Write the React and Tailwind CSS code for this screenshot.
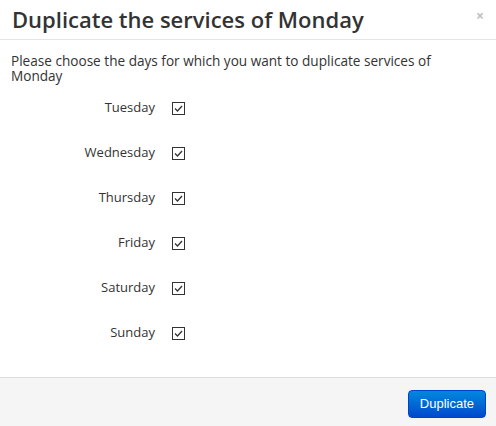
import React from 'react';

const days = ['Tuesday', 'Wednesday', 'Thursday', 'Friday', 'Saturday', 'Sunday'];

const CheckMark = () => (
    <span className="flex h-[13px] w-[13px] items-center justify-center border border-[#333] bg-white">
        <svg width="11" height="11" viewBox="0 0 11 11" fill="none">
            <path d="M2 5.5 L4.5 8 L9 3" stroke="#333" strokeWidth="1.3" />
        </svg>
    </span>
);

export default function App() {
    return (
        <div className="flex h-[426px] w-[496px] flex-col bg-white font-['Open_Sans',sans-serif] text-[#333]">
            {/* header */}
            <div className="flex h-[40px] items-start justify-between border-b border-[#e5e5e5] pl-[12px] pr-[12px]">
                <h3 className="mt-[3px] text-[22px] leading-[32px] font-semibold text-[#333]">Duplicate the services of Monday</h3>
                <span className="mt-[5px] text-[14px] font-bold text-[#c0c0c0]">×</span>
            </div>

            {/* body */}
            <div className="flex-1 px-[11px] pt-[13px]">
                <p className="text-[13.6px] leading-[15px]">
                    Please choose the days for which you want to duplicate services of Monday
                </p>
                <div className="mt-[16px] flex flex-col gap-[27px]">
                    {days.map(day => (
                        <div key={day} className="flex h-[18px] items-center">
                            <span className="w-[144px] text-right text-[13px]">{day}</span>
                            <span className="ml-[17px]"><CheckMark /></span>
                        </div>
                    ))}
                </div>
            </div>

            {/* footer */}
            <div className="flex h-[49px] items-start justify-end border-t border-[#ddd] bg-[#f5f5f5] pr-[10px] pt-[12px]">
                <button className="h-[28px] rounded-[4px] border border-[#0044cc] bg-gradient-to-b from-[#0088dd] to-[#0048cc] px-[11px] font-['Liberation_Sans',sans-serif] text-[13px] text-white">
                    Duplicate
                </button>
            </div>
        </div>
    );
}
